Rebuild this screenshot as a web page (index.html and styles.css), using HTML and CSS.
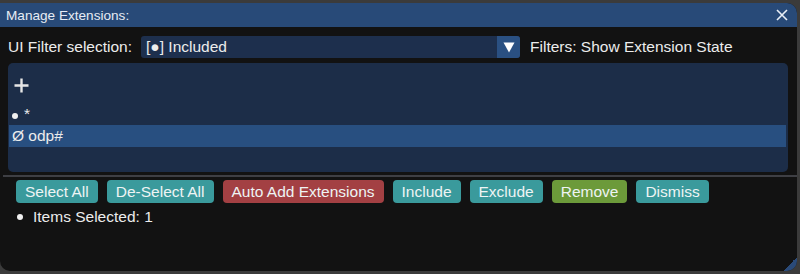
FILE: index.html
```html
<!DOCTYPE html>
<html>
<head>
<meta charset="utf-8">
<link rel="stylesheet" href="styles.css">
</head>
<body>
<div class="window">
  <div class="titlebar">
    <span class="title">Manage Extensions:</span>
    <svg class="close" width="12" height="12" viewBox="0 0 12 12"><path d="M1 1L11 11M11 1L1 11" stroke="#e8eef6" stroke-width="1.6" fill="none"/></svg>
  </div>
  <div class="content">
    <div class="filter-row">
      <span class="label">UI Filter selection:</span>
      <div class="combo">
        <span class="combo-text">[●] Included</span>
        <span class="combo-btn"><svg width="12" height="11" viewBox="0 0 12 11"><path d="M0.5 0.5H11.5L6 10.5Z" fill="#ffffff"/></svg></span>
      </div>
      <span class="label">Filters: Show Extension State</span>
    </div>
    <div class="list">
      <div class="plus"><svg width="15" height="15" viewBox="0 0 15 15"><path d="M7.5 0.5V14.5M0.5 7.5H14.5" stroke="#e6e6e6" stroke-width="2.4"/></svg></div>
      <div class="item first"><span class="dot"></span>*</div>
      <div class="item selected">Ø odp#</div>
    </div>
  </div>
  <div class="sep"></div>
  <div class="buttons">
    <button class="btn teal">Select All</button>
    <button class="btn teal">De-Select All</button>
    <button class="btn red">Auto Add Extensions</button>
    <button class="btn teal">Include</button>
    <button class="btn teal">Exclude</button>
    <button class="btn green">Remove</button>
    <button class="btn teal">Dismiss</button>
  </div>
  <div class="status"><span class="dot"></span><span>Items Selected: 1</span></div>
  <div class="grip"></div>
</div>
</body>
</html>
```
FILE: styles.css
```css
html, body {
  margin: 0;
  padding: 0;
  background: #3b3b3b;
  width: 800px;
  height: 274px;
  overflow: hidden;
  font-family: "Liberation Sans", Arial, sans-serif;
  font-size: 15.5px;
  color: #ececec;
}
.window {
  position: relative;
  margin-top: 3px;
  width: 797px;
  height: 268px;
  background: #121212;
  border-radius: 0 10px 10px 10px;
  overflow: hidden;
  display: flex;
  flex-direction: column;
}
.titlebar {
  height: 24px;
  flex: none;
  background: #284a78;
  display: flex;
  align-items: center;
  justify-content: space-between;
  padding: 0 9px 0 6px;
}
.title {
  font-size: 13.6px;
  color: #e6ecf4;
}
.close { display: block; }
.content {
  padding: 9px 9px 0 8px;
}
.filter-row {
  display: flex;
  align-items: center;
  height: 22px;
}
.label { white-space: nowrap; }
.combo {
  margin-left: 9px;
  margin-right: 10px;
  width: 379px;
  flex: none;
  height: 22px;
  background: #1d2f4d;
  border-radius: 3px;
  display: flex;
  align-items: center;
  overflow: hidden;
}
.combo-text {
  flex: 1;
  padding-left: 5px;
}
.combo-btn {
  width: 23px;
  height: 22px;
  background: #2a5082;
  display: flex;
  align-items: center;
  justify-content: center;
}
.list {
  margin-top: 5px;
  height: 109px;
  width: 780px;
  background: #1c2d48;
  border-radius: 5px;
  box-sizing: border-box;
  padding: 15px 2px 0 1px;
}
.plus {
  height: 14px;
  padding-left: 5px;
}
.plus svg { display: block; }
.item {
  height: 22px;
  padding-left: 3px;
  display: flex;
  align-items: center;
}
.item.first { margin-top: 11px; }
.item .dot { margin-right: 6px; margin-top: 3px; }
.dot {
  display: inline-block;
  width: 6px;
  height: 6px;
  border-radius: 50%;
  background: #f0f0f0;
}
.selected { background: #284f80; }
.sep {
  margin-top: 3px;
  height: 2px;
  flex: none;
  background: #3e3f44;
  margin-left: 3px;
}
.buttons {
  display: flex;
  gap: 9px;
  padding: 3px 0 0 16px;
}
.btn {
  font-family: "Liberation Sans", Arial, sans-serif;
  font-size: 15.5px;
  color: #eef4f4;
  border: none;
  border-radius: 4px;
  height: 23px;
  padding: 0 9px;
}
.teal { background: #3a9a9c; }
.red { background: #a34043; }
.green { background: #6c9a3a; }
.status {
  display: flex;
  align-items: center;
  padding: 5px 0 0 17px;
  height: 18px;
}
.status .dot { margin-right: 10px; }
.grip {
  position: absolute;
  right: 0;
  bottom: 0;
  width: 14px;
  height: 14px;
  background: linear-gradient(135deg, transparent 50%, #2a4a78 50%);
}
```
